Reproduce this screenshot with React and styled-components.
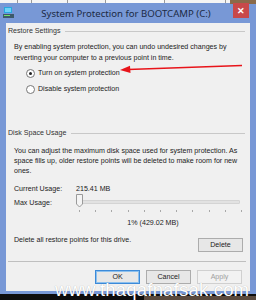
import React from "react";
import styled, { createGlobalStyle } from "styled-components";

const Global = createGlobalStyle`
  html, body { margin: 0; padding: 0; background: #111; }
  body { font-family: "Liberation Sans", Arial, sans-serif; }
`;

const Page = styled.div`
  position: relative;
  width: 256px;
  height: 300px;
  overflow: hidden;
  background: #0d0d0d;
  display: flex;
  flex-direction: column;
`;

const TopStrip = styled.div`
  height: 3px;
  display: flex;
  background: #f4f4f4;
`;

const Tab = styled.div`
  width: ${(p) => p.w}px;
  border-right: 1px solid #9a9a9a;
  background: ${(p) => p.bg || "transparent"};
`;

const Window = styled.div`
  height: 291px;
  background: #7898d6;
  display: flex;
  flex-direction: column;
  padding: 0 6px 3px 6px;
  box-sizing: border-box;
`;

const TitleBar = styled.div`
  height: 20px;
  position: relative;
  display: flex;
  align-items: center;
  justify-content: center;
`;

const Title = styled.div`
  font-family: "Noto Sans", "Open Sans", sans-serif;
  font-size: 9.6px;
  color: #1c2a44;
  margin-left: -4px;
`;

const AppIcon = styled.svg`
  position: absolute;
  left: -3px;
  top: 3px;
`;

const Close = styled.div`
  position: absolute;
  right: 1px;
  top: 0;
  width: 16px;
  height: 15px;
  background: #c8494a;
  color: #fff;
  font-size: 9px;
  font-weight: bold;
  display: flex;
  align-items: center;
  justify-content: center;
`;

const Client = styled.div`
  flex: 1;
  background: #f0f0f0;
  display: flex;
  flex-direction: column;
  padding: 3px 4px 0 2px;
  font-size: 7.1px;
  color: #222;
  line-height: 10.3px;
  white-space: nowrap;
`;

const GroupHead = styled.div`
  display: flex;
  align-items: center;
  gap: 5px;
  color: #333;
  &::after {
    content: "";
    flex: 1;
    height: 1px;
    background: #c8c8c8;
    margin-right: 1px;
  }
`;

const GroupBody = styled.div`
  padding: ${(p) => p.pt}px 0 0 6px;
  display: flex;
  flex-direction: column;
`;

const Para = styled.div`
  color: #222;
`;

const RadioRow = styled.div`
  position: relative;
  display: flex;
  align-items: center;
  gap: 3px;
  margin-left: 12px;
  margin-top: ${(p) => p.mt}px;
`;

const RadioCircle = styled.span`
  width: 7px;
  height: 7px;
  border-radius: 50%;
  border: 1px solid #777;
  background: #fff;
  display: flex;
  align-items: center;
  justify-content: center;
  &::after {
    content: "";
    width: 3px;
    height: 3px;
    border-radius: 50%;
    background: ${(p) => (p.checked ? "#222" : "transparent")};
  }
`;

const Arrow = styled.svg`
  position: absolute;
  left: 94px;
  top: -4px;
`;

const Spacer = styled.div`
  height: ${(p) => p.h}px;
`;

const InfoRow = styled.div`
  display: grid;
  grid-template-columns: 62px 1fr;
  align-items: start;
  margin-top: ${(p) => p.mt}px;
`;

const Slider = styled.div`
  position: relative;
  height: 21px;
  margin-top: -4px;
`;

const Track = styled.div`
  position: absolute;
  left: 2px;
  right: 6px;
  top: 6px;
  height: 2px;
  background: #e2e2e2;
  border: 1px solid #d4d4d4;
  border-radius: 1px;
`;

const Thumb = styled.svg`
  position: absolute;
  left: 0;
  top: 0;
`;

const Ticks = styled.div`
  position: absolute;
  left: 3px;
  right: 4px;
  top: 16px;
  display: flex;
  justify-content: space-between;
`;

const Tick = styled.span`
  width: 1px;
  height: 2px;
  background: #a8a8a8;
`;

const Centered = styled.div`
  text-align: center;
  margin-top: 3px;
  padding-left: 46px;
`;

const DeleteRow = styled.div`
  display: flex;
  justify-content: space-between;
  align-items: flex-start;
  margin-top: 7px;
  padding-right: 3px;
`;

const Button = styled.div`
  width: 45px;
  height: 14px;
  box-sizing: border-box;
  border: 1px solid ${(p) => (p.focus ? "#3c8ad8" : p.disabled ? "#d0d0d0" : "#acacac")};
  box-shadow: ${(p) => (p.focus ? "inset 0 0 0 1px #8cc0ee" : "none")};
  background: ${(p) => (p.disabled ? "#f2f2f2" : "#e7e7e7")};
  color: ${(p) => (p.disabled ? "#a0a0a0" : "#222")};
  display: flex;
  align-items: center;
  justify-content: center;
  margin-top: ${(p) => p.mt || 0}px;
`;

const Sep = styled.div`
  height: 1px;
  background: #bfbfbf;
  margin: 9px 0 0 0;
`;

const Footer = styled.div`
  display: flex;
  justify-content: flex-end;
  gap: 6px;
  margin-top: 8px;
  padding-right: 4px;
`;

const Watermark = styled.div`
  position: absolute;
  left: 55px;
  top: 279px;
  font-family: "Liberation Sans", Arial, sans-serif;
  font-size: 18.5px;
  color: #fff;
  letter-spacing: 0.2px;
  text-shadow: 0 0 1px rgba(0,0,0,0.3);
  white-space: nowrap;
`;

const Photo = styled.div`
  position: absolute;
  ${(p) => p.pos};
  background: ${(p) => p.bg};
`;

export default function App() {
  const ticks = Array.from({ length: 11 });
  return (
    <>
      <Global />
      <Page>
        <TopStrip>
          <Tab w={17} />
          <Tab w={13} />
          <Tab w={35} />
          <Tab w={37} />
          <Tab w={58} bg="#fafafa" />
          <Tab w={60} />
        </TopStrip>
        <Photo pos="right:0;top:0;width:26px;height:4px;" bg="#8a6a4a" />
        <Window>
          <TitleBar>
            <AppIcon width="11" height="13" viewBox="0 0 11 13">
              <rect x="1" y="1" width="8" height="6" fill="#29a8e0" />
              <rect x="2" y="2" width="6" height="4" fill="#6fd2f5" />
              <rect x="0" y="8" width="11" height="4" fill="#3d5a6a" />
              <rect x="1" y="9" width="6" height="1" fill="#72e06a" />
            </AppIcon>
            <Title>System Protection for BOOTCAMP (C:)</Title>
            <Close>✕</Close>
          </TitleBar>
          <Client>
            <GroupHead>Restore Settings</GroupHead>
            <GroupBody pt={6}>
              <Para>
                By enabling system protection, you can undo undesired changes by
                <br />
                reverting your computer to a previous point in time.
              </Para>
              <RadioRow mt={5}>
                <RadioCircle checked />
                Turn on system protection
                <Arrow width="124" height="9" viewBox="0 0 124 9">
                  <line x1="8" y1="5.5" x2="122" y2="1.5" stroke="#e8141a" strokeWidth="1.4" />
                  <polygon points="0,6 10,1.8 10.5,9" fill="#e8141a" />
                </Arrow>
              </RadioRow>
              <RadioRow mt={6}>
                <RadioCircle />
                Disable system protection
              </RadioRow>
            </GroupBody>
            <Spacer h={34} />
            <GroupHead>Disk Space Usage</GroupHead>
            <GroupBody pt={7}>
              <Para>
                You can adjust the maximum disk space used for system protection. As
                <br />
                space fills up, older restore points will be deleted to make room for new
                <br />
                ones.
              </Para>
              <InfoRow mt={7}>
                <span>Current Usage:</span>
                <span>215.41 MB</span>
              </InfoRow>
              <InfoRow mt={4}>
                <span>Max Usage:</span>
                <Slider>
                  <Track />
                  <Thumb width="8" height="14" viewBox="0 0 8 14">
                    <path d="M0.5 0.5 H6.5 V10 L3.5 13 L0.5 10 Z" fill="#f4f4f4" stroke="#9a9a9a" />
                  </Thumb>
                  <Ticks>
                    {ticks.map((_, i) => (
                      <Tick key={i} />
                    ))}
                  </Ticks>
                </Slider>
              </InfoRow>
              <Centered>1% (429.02 MB)</Centered>
              <DeleteRow>
                <span>Delete all restore points for this drive.</span>
                <Button mt={3}>Delete</Button>
              </DeleteRow>
            </GroupBody>
            <Sep />
            <Footer>
              <Button focus>OK</Button>
              <Button>Cancel</Button>
              <Button disabled>Apply</Button>
            </Footer>
          </Client>
        </Window>
        <Photo pos="left:144px;top:296px;width:112px;height:4px;" bg="#5a4a3e" />
        <Watermark>www.thaqafnafsak.com</Watermark>
      </Page>
    </>
  );
}
